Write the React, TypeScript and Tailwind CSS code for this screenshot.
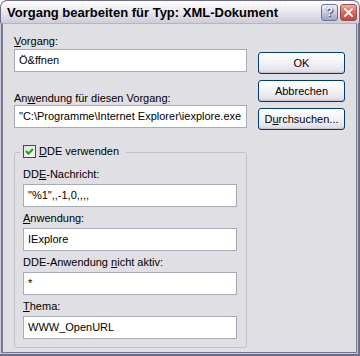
import React from "react";

const font = "font-['Liberation_Sans',Arial,sans-serif]";

function U({ children }: { children: React.ReactNode }) {
  return <span className="underline underline-offset-[1px] decoration-1">{children}</span>;
}

function Label({ children, className = "" }: { children: React.ReactNode; className?: string }) {
  return <div className={`h-[13px] text-[11px] leading-[13px] text-black ${className}`}>{children}</div>;
}

function Field({ value, className = "" }: { value: string; className?: string }) {
  return (
    <div
      className={`flex h-[23px] items-center overflow-hidden whitespace-nowrap border border-[#a5acb5] bg-white pl-[4px] text-[11px] text-black ${className}`}
    >
      {value}
    </div>
  );
}

function XpButton({ children }: { children: React.ReactNode }) {
  return (
    <button className="flex h-[22px] w-[87px] items-center justify-center rounded-[3px] border border-[#003c74] bg-[linear-gradient(180deg,#ffffff_0%,#f4f4f8_45%,#e4e3ec_85%,#d2d1de_100%)] text-[11px] text-black shadow-[inset_0_-1px_0_#c6c5d4]">
      {children}
    </button>
  );
}

function TitleButtons() {
  return (
    <div className="flex items-center gap-[2px]">
      <div className="flex h-[17px] w-[17px] items-center justify-center rounded-[3px] border border-[#6e7396] bg-[linear-gradient(180deg,#eef0f6_0%,#c9cce0_50%,#9ea3c2_100%)] text-[12px] font-bold leading-none text-white [text-shadow:0_0_1px_#3c4066,1px_1px_0_#4a4f78]">
        ?
      </div>
      <div className="flex h-[17px] w-[17px] items-center justify-center rounded-[3px] border border-[#9a4a4a] bg-[linear-gradient(180deg,#f0b0a4_0%,#dc6e60_45%,#c4473c_100%)]">
        <svg width="11" height="11" viewBox="0 0 11 11">
          <path d="M2 2 L9 9 M9 2 L2 9" stroke="#7a2a2a" strokeWidth="3" strokeLinecap="square" opacity="0.35" />
          <path d="M2 2 L9 9 M9 2 L2 9" stroke="#ffffff" strokeWidth="2" strokeLinecap="square" />
        </svg>
      </div>
    </div>
  );
}

function CheckBox() {
  return (
    <div className="flex h-[13px] w-[13px] items-center justify-center border border-[#1c5180] bg-[linear-gradient(135deg,#dcdcd7_0%,#f2f2ef_60%,#ffffff_100%)]">
      <svg width="11" height="11" viewBox="0 0 11 11">
        <path d="M2 5 L4.5 7.5 L9 3" fill="none" stroke="#21a121" strokeWidth="2.2" />
      </svg>
    </div>
  );
}

export default function App() {
  return (
    <div className={`flex h-[356px] w-[360px] flex-col bg-white ${font}`}>
      {/* title bar */}
      <div className="flex h-[23px] items-center justify-between rounded-t-[7px] border-x border-t border-[#6e6e88] bg-[linear-gradient(180deg,#ffffff_0%,#f3f3f7_25%,#e3e2ea_60%,#cccbd9_100%)] pl-[6px] pr-[2px]">
        <span className="pt-[1px] text-[13px] font-bold leading-none text-black">
          Vorgang bearbeiten für Typ: XML-Dokument
        </span>
        <TitleButtons />
      </div>

      {/* frame */}
      <div className="flex flex-1 flex-col border-b-2 border-r-2 border-[#6e6e88]">
        <div className="flex flex-1 flex-col border-b border-l border-r border-[#c8c8d6]">
          <div className="flex flex-1 flex-col border-b border-l-2 border-r border-t border-[#77778f] border-t-[#b4b4c6] bg-[#e0dfe3]">
            {/* top section */}
            <div className="flex pl-[11px]">
              <div className="w-[233px] pt-[11px]">
                <Label>
                  <U>V</U>organg:
                </Label>
                <Field value="Ö&ffnen" className="mt-[1px]" />
                <Label className="mt-[20px]">
                  An<U>w</U>endung für diesen Vorgang:
                </Label>
                <Field value={'"C:\\Programme\\Internet Explorer\\iexplore.exe'} />
              </div>
              <div className="ml-[11px] flex flex-col gap-[6px] pt-[28px]">
                <XpButton>OK</XpButton>
                <XpButton>Abbrechen</XpButton>
                <XpButton>
                  D<U>u</U>rchsuchen...
                </XpButton>
              </div>
            </div>

            {/* DDE group */}
            <div className="relative ml-[11px] mt-[22px] w-[233px] rounded-[3px] border border-[#c4c0c8] pb-[8px] pl-[8px] pr-[9px] pt-[15px]">
              <div className="absolute left-[5px] top-[-8px] flex items-center gap-[3px] bg-[#e0dfe3] pl-[3px] pr-[7px]">
                <CheckBox />
                <span className="text-[11px] leading-[13px] text-black">
                  <U>D</U>DE verwenden
                </span>
              </div>
              <Label>
                DD<U>E</U>-Nachricht:
              </Label>
              <Field value={'"%1",,-1,0,,,,'} className="mt-[3px]" />
              <Label className="mt-[5px]">
                <U>A</U>nwendung:
              </Label>
              <Field value="IExplore" className="mt-[3px]" />
              <Label className="mt-[5px]">
                DDE-Anwendung <U>n</U>icht aktiv:
              </Label>
              <Field value="*" className="mt-[3px]" />
              <Label className="mt-[5px]">
                <U>T</U>hema:
              </Label>
              <Field value="WWW_OpenURL" className="mt-[3px]" />
            </div>
          </div>
        </div>
      </div>
    </div>
  );
}
